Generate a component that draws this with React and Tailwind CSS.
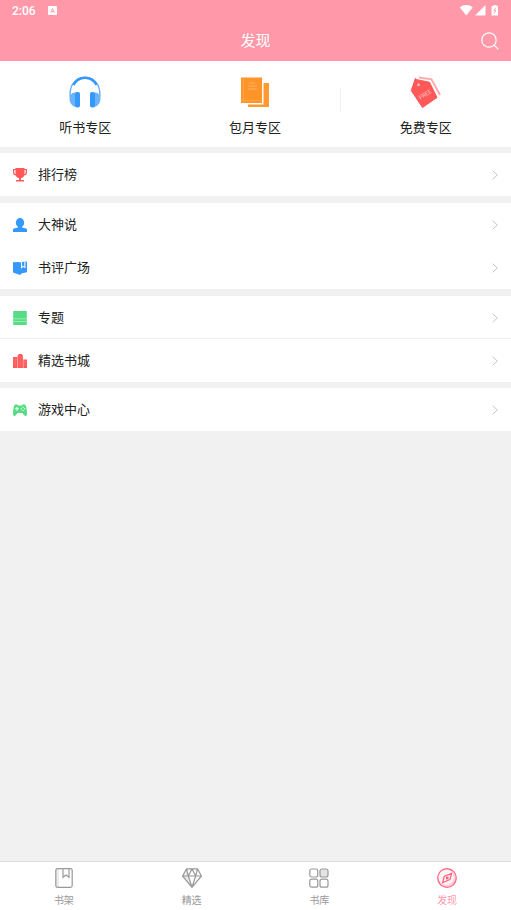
import React from "react";

const font = "font-['Roboto','Noto_Sans_CJK_SC',sans-serif]";

function Headphones() {
  return (
    <svg className="size-8" viewBox="0 0 32 32" fill="none" aria-hidden="true">
      <path d="M6.500 16.500H5C2.500 17 .500 19 .500 22.500c0 4.500 2.500 7.500 6 8.500z" fill="#6bb3fd" />
      <path d="M25.500 16.500H27c2.500.500 4.500 2.500 4.500 6 0 4.500-2.500 7.500-6 8.500z" fill="#6bb3fd" />
      <path d="M1.200 21C.200 8 7 1.500 16 1.500S31.800 8 30.800 21" stroke="#6bb3fd" strokeWidth="1.500" />
      <path d="M4.500 9C7 4 11 1.700 16 1.700S25 4 27.500 9" stroke="#3399fd" strokeWidth="2.600" />
      <rect x="6" y="16" width="5" height="15.500" rx="2" fill="#3399fd" />
      <rect x="21" y="16" width="5" height="15.500" rx="2" fill="#3399fd" />
    </svg>
  );
}

function Books() {
  return (
    <svg className="size-8" viewBox="0 0 32 32" aria-hidden="true">
      <path d="M24.500 7H30v24H9v-2.500h15.500z" fill="#ff9a33" />
      <path d="M2 1.500h21V27H2z" fill="#ff9428" />
      <path d="M4.500 1.500V27M2 24.500h21" stroke="#ffa64d" strokeWidth=".8" />
      <path d="M10.500 7h5.500M9 10h9M9 13h9" stroke="#ffb566" strokeWidth="1" />
    </svg>
  );
}

function FreeTag() {
  return (
    <svg className="size-8" viewBox="0 0 32 32" aria-hidden="true">
      <path d="M9 1.500 21.500 3.300 30 19" fill="none" stroke="#ffabab" strokeWidth="2" />
      <path d="M5.500 2.200 7 3.700 19.500 6.200 27 21.500 12.500 31.500 1.200 14.500z" fill="#ff5858" stroke="#ff5858" strokeLinejoin="round" />
      <circle cx="8.500" cy="8.700" r="1.500" fill="#ffb4b4" />
      <text x="15" y="20.500" transform="rotate(-32 15 18)" textAnchor="middle" fontSize="6" fill="#ffc2c2" fontFamily="Roboto">FREE</text>
    </svg>
  );
}

function Trophy() {
  return (
    <svg className="size-3.5" viewBox="0 0 14 14" aria-hidden="true">
      <path d="M2.500 0h9v5.500c0 2.700-1.400 4.300-3.500 4.600V12h3v1.600H3V12h3v-1.900C3.900 9.800 2.500 8.200 2.500 5.500z" fill="#ff5858" />
      <path d="M3 1.500H.6v2.800c0 1.500 1 2.500 2.600 2.700M11 1.500h2.400v2.800c0 1.500-1 2.500-2.600 2.700" fill="none" stroke="#ff5858" strokeWidth="1.200" />
    </svg>
  );
}

function Person() {
  return (
    <svg className="size-3.5" viewBox="0 0 14 14" fill="#3399fd" aria-hidden="true">
      <ellipse cx="7" cy="4.700" rx="4.200" ry="4.700" />
      <path d="M5 7.500h4v2l4.200 1c.5.200.8.700.8 1.200V14H0v-2.300c0-.5.300-1 .8-1.200L5 9.500z" />
    </svg>
  );
}

function BookMark() {
  return (
    <svg className="size-3.5" viewBox="0 0 14 14" aria-hidden="true">
      <path d="M0 1.200 6 1l1 .5L8 1l6-.5v10.800l-5 1L7 14 0 11.500z" fill="#3399fd" />
      <path d="M8.500 1v5.700l1.700-1.300 1.700 1V.7" fill="none" stroke="#fff" strokeWidth="1.100" />
    </svg>
  );
}

function Topic() {
  return (
    <svg className="size-3.5" viewBox="0 0 14 14" aria-hidden="true">
      <path d="M.2 0h13.600v14H.2z" fill="#57dc83" />
      <path d="M.2 7.800h13.600M.2 10.500h13.600" stroke="#b5f0c8" strokeWidth=".7" />
    </svg>
  );
}

function City() {
  return (
    <svg className="size-3.5" viewBox="0 0 14 14" aria-hidden="true">
      <path d="M0 3h4.200v11H0zM4.600 1.500 6 0h2.500l1.400 1.500V14H4.600zM10.300 5.500H14V14h-3.700z" fill="#ff5858" />
      <path d="M0 5.200h4M5.500 3h3.600M10.300 7.500H14M2 5.500V12M7.200 4v8M12 8v4" stroke="#ff8585" strokeWidth=".6" />
    </svg>
  );
}

function Gamepad() {
  return (
    <svg className="size-3.5" viewBox="0 0 14 14" aria-hidden="true">
      <path d="M3.500 1.200 5.500 2.500h3l2-1.300c1.600 0 2.500 1 2.800 3 .4 2 .7 4.200.7 6.500 0 1.500-.7 2.300-1.600 2.300-1.400 0-2.200-3-3.400-3H5C3.800 10 3 13 1.600 13 .7 13 0 12.200 0 10.700c0-2.300.3-4.500.7-6.500.3-2 1.200-3 2.800-3z" fill="#57dc83" />
      <path d="M4 4v3.600M2.200 5.800h3.600" stroke="#fff" strokeWidth="1.100" />
      <g fill="#e5faec"><circle cx="10" cy="4.200" r=".7" /><circle cx="10" cy="7.400" r=".7" /><circle cx="8.400" cy="5.800" r=".7" /><circle cx="11.600" cy="5.800" r=".7" /></g>
    </svg>
  );
}

function ShelfIcon() {
  return (
    <svg className="size-5" viewBox="0 0 20 20" fill="none" stroke="#999" strokeWidth="1.200" aria-hidden="true">
      <path d="M2 1h3v18H2z" fill="#ececec" stroke="none" />
      <rect x="1.800" y=".7" width="16.400" height="18.600" rx="1.800" />
      <path d="M9 1v8.300l3-2.200 3 2.200V1" />
    </svg>
  );
}

function DiamondIcon() {
  return (
    <svg className="size-5" viewBox="0 0 20 20" fill="none" stroke="#999" strokeWidth="1.200" strokeLinejoin="round" aria-hidden="true">
      <path d="M4.500 1 .7 8l9.300 11L6.500 8z" fill="#ececec" stroke="none" />
      <path d="M4.500.8h11L19.400 8 10 19.300.6 8zM.6 8h18.800M6.300 8 10 19.300 13.700 8M4.500.8 6.300 8 10 .8 13.700 8 15.500.8" />
    </svg>
  );
}

function GridIcon() {
  return (
    <svg className="size-5" viewBox="0 0 20 20" fill="none" stroke="#999" strokeWidth="1.200" aria-hidden="true">
      <rect x=".8" y="1" width="8" height="8" rx="2" />
      <rect x="11" y="1" width="8" height="8" rx="2" fill="#e3e3e3" />
      <rect x=".8" y="11.200" width="8" height="8" rx="2" />
      <rect x="11" y="11.200" width="8" height="8" rx="2" />
    </svg>
  );
}

function CompassIcon() {
  return (
    <svg className="size-5" viewBox="0 0 20 20" fill="none" stroke="#ff6380" strokeWidth="1.200" strokeLinejoin="round" aria-hidden="true">
      <circle cx="10" cy="10" r="9.300" fill="#ffd0d9" />
      <circle cx="9.300" cy="9.300" r="7.500" fill="#fff5f7" stroke="none" />
      <path d="M14.800 5.200 13 11.500 5.500 14.800 7.300 8.200z" fill="#ffe3e8" />
      <circle cx="10.200" cy="10" r=".8" />
    </svg>
  );
}

function Chevron() {
  return (
    <svg className="h-2.5 w-1.5" viewBox="0 0 6 10" fill="none" stroke="#c4c4c4" aria-hidden="true">
      <path d="m.7.700 4.600 4.300L.7 9.300" />
    </svg>
  );
}

const zones = [
  { label: "听书专区", Icon: Headphones },
  { label: "包月专区", Icon: Books, divider: true },
  { label: "免费专区", Icon: FreeTag },
];

const sections = [
  { gap: "mt-1.5", rows: [{ label: "排行榜", Icon: Trophy }] },
  { gap: "mt-[7px]", rows: [{ label: "大神说", Icon: Person }, { label: "书评广场", Icon: BookMark }] },
  { gap: "mt-[7px]", rows: [{ label: "专题", Icon: Topic, line: true }, { label: "精选书城", Icon: City }] },
  { gap: "mt-1.5", rows: [{ label: "游戏中心", Icon: Gamepad }] },
];

const tabs = [
  { label: "书架", Icon: ShelfIcon },
  { label: "精选", Icon: DiamondIcon },
  { label: "书库", Icon: GridIcon },
  { label: "发现", Icon: CompassIcon, active: true },
];

export default function App() {
  return (
    <div className={`flex min-h-screen flex-col bg-[#f1f1f1] text-[#222] ${font}`}>
      <header className="bg-[#ff99a9] text-white">
        <div className="flex h-[21px] items-center px-3 text-xs font-medium">
          <span>2:06</span>
          <svg className="ml-3 size-[9px]" viewBox="0 0 8 8" aria-hidden="true">
            <rect width="8" height="8" rx="1" fill="#fff" />
            <path d="M2.400 6.200 4 2.200l1.600 4M3 4.900h2" fill="none" stroke="#ff99a9" strokeWidth=".8" />
          </svg>
          <svg className="ml-auto h-3 w-10" viewBox="0 0 40 12" fill="#fff" aria-hidden="true">
            <path d="M.8 2.500C4.500-.700 10-.700 13.700 2.500L7.200 10.500zM26.500 0v10.500H16z" />
            <path d="M34.500 0h3v1H39v9.500h-6.500V1h2z" />
            <path d="M36.800 2.700 34.900 5.600h2L35.200 8.300" fill="none" stroke="#ff99a9" strokeWidth=".9" />
          </svg>
        </div>
        <div className="grid h-10 grid-cols-[1fr_auto_1fr] items-center px-3">
          <h1 className="col-start-2 text-[15px] leading-5">发现</h1>
          <button type="button" aria-label="搜索" className="justify-self-end">
            <svg className="size-[18px]" viewBox="0 0 18 18" fill="none" stroke="#fff" strokeWidth="1.200" aria-hidden="true">
              <circle cx="8" cy="8" r="7.200" />
              <path d="m13.100 13.100 4.300 4.300" />
            </svg>
          </button>
        </div>
      </header>

      <main className="flex-1">
        <nav aria-label="专区" className="grid h-[86px] grid-cols-3 items-center bg-white">
          {zones.map(({ label, Icon, divider }) => (
            <div key={label} className="flex items-center">
              <a href="#" className="flex flex-1 flex-col items-center gap-2.5 pt-1.5 text-[13px] leading-5">
                <Icon />
                {label}
              </a>
              {divider && <span className="mb-2 h-6 w-px bg-[#f0f0f0]" />}
            </div>
          ))}
        </nav>

        {sections.map(({ gap, rows }) => (
          <ul key={rows[0].label} className={`bg-white ${gap}`}>
            {rows.map(({ label, Icon, line }) => (
              <li key={label} className={line ? "h-[43px] border-b border-[#f1f1f1]" : "h-[43px]"}>
                <a href="#" className="flex items-center px-[13px] pt-3 text-[13px] leading-5">
                  <Icon />
                  <span className="ml-[11px] flex-1">{label}</span>
                  <Chevron />
                </a>
              </li>
            ))}
          </ul>
        ))}
      </main>

      <nav aria-label="主导航" className="sticky bottom-0 grid h-[49px] grid-cols-4 border-t border-[#dedede] bg-white">
        {tabs.map(({ label, Icon, active }) => (
          <a
            key={label}
            href="#"
            aria-current={active ? "page" : undefined}
            className={`flex flex-col items-center gap-[5px] pt-1.5 text-[10px] leading-4 ${active ? "text-[#ff99a9]" : "text-[#999]"}`}
          >
            <Icon />
            {label}
          </a>
        ))}
      </nav>
    </div>
  );
}
